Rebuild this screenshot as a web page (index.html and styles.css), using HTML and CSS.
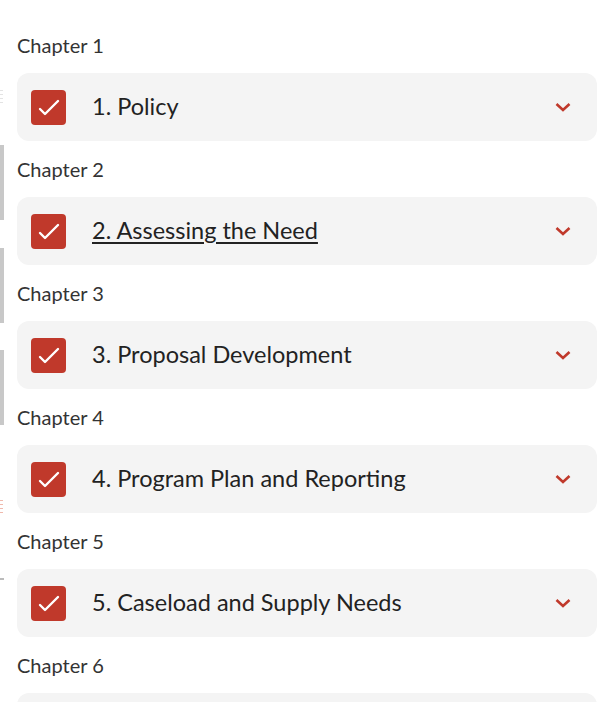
FILE: index.html
```html
<!DOCTYPE html>
<html lang="en">
<head>
<meta charset="utf-8">
<title>Chapters</title>
<link rel="stylesheet" href="styles.css">
</head>
<body>
<div class="edge">
  <span class="mark mark-a"></span>
  <span class="bar bar-1"></span>
  <span class="bar bar-2"></span>
  <span class="bar bar-3"></span>
  <span class="mark mark-b"></span>
  <span class="mark mark-c"></span>
</div>
<main class="list">
  <section class="chapter">
    <div class="label">Chapter 1</div>
    <div class="card">
      <span class="check"><svg viewBox="0 0 35 35" width="35" height="35"><path d="M9 19 L14 24 L27 11" fill="none" stroke="#fff" stroke-width="2.4" stroke-linecap="round" stroke-linejoin="round"/></svg></span>
      <span class="title">1. Policy</span>
      <svg class="chev" viewBox="0 0 16 10" width="16" height="10"><path d="M1.5 2 L8 8 L14.5 2" fill="none" stroke="#c0392b" stroke-width="2.6"/></svg>
    </div>
  </section>
  <section class="chapter">
    <div class="label">Chapter 2</div>
    <div class="card">
      <span class="check"><svg viewBox="0 0 35 35" width="35" height="35"><path d="M9 19 L14 24 L27 11" fill="none" stroke="#fff" stroke-width="2.4" stroke-linecap="round" stroke-linejoin="round"/></svg></span>
      <span class="title underline">2. Assessing the Need</span>
      <svg class="chev" viewBox="0 0 16 10" width="16" height="10"><path d="M1.5 2 L8 8 L14.5 2" fill="none" stroke="#c0392b" stroke-width="2.6"/></svg>
    </div>
  </section>
  <section class="chapter">
    <div class="label">Chapter 3</div>
    <div class="card">
      <span class="check"><svg viewBox="0 0 35 35" width="35" height="35"><path d="M9 19 L14 24 L27 11" fill="none" stroke="#fff" stroke-width="2.4" stroke-linecap="round" stroke-linejoin="round"/></svg></span>
      <span class="title">3. Proposal Development</span>
      <svg class="chev" viewBox="0 0 16 10" width="16" height="10"><path d="M1.5 2 L8 8 L14.5 2" fill="none" stroke="#c0392b" stroke-width="2.6"/></svg>
    </div>
  </section>
  <section class="chapter">
    <div class="label">Chapter 4</div>
    <div class="card">
      <span class="check"><svg viewBox="0 0 35 35" width="35" height="35"><path d="M9 19 L14 24 L27 11" fill="none" stroke="#fff" stroke-width="2.4" stroke-linecap="round" stroke-linejoin="round"/></svg></span>
      <span class="title">4. Program Plan and Reporting</span>
      <svg class="chev" viewBox="0 0 16 10" width="16" height="10"><path d="M1.5 2 L8 8 L14.5 2" fill="none" stroke="#c0392b" stroke-width="2.6"/></svg>
    </div>
  </section>
  <section class="chapter">
    <div class="label">Chapter 5</div>
    <div class="card">
      <span class="check"><svg viewBox="0 0 35 35" width="35" height="35"><path d="M9 19 L14 24 L27 11" fill="none" stroke="#fff" stroke-width="2.4" stroke-linecap="round" stroke-linejoin="round"/></svg></span>
      <span class="title">5. Caseload and Supply Needs</span>
      <svg class="chev" viewBox="0 0 16 10" width="16" height="10"><path d="M1.5 2 L8 8 L14.5 2" fill="none" stroke="#c0392b" stroke-width="2.6"/></svg>
    </div>
  </section>
  <section class="chapter">
    <div class="label">Chapter 6</div>
    <div class="card"></div>
  </section>
</main>
</body>
</html>
```
FILE: styles.css
```css
html, body {
  margin: 0;
  padding: 0;
  background: #ffffff;
  overflow: hidden;
  height: 702px;
}
body {
  font-family: Lato, "Open Sans", sans-serif;
  color: #222;
}
.list {
  padding: 33px 10px 0 17px;
  display: flex;
  flex-direction: column;
}
.chapter {
  display: flex;
  flex-direction: column;
  margin-bottom: 16px;
}
.label {
  font-size: 20px;
  line-height: 24px;
  color: #333;
  margin-bottom: 16px;
}
.card {
  height: 68px;
  background: #f4f4f4;
  border-radius: 12px;
  display: flex;
  align-items: center;
  padding: 0 26px 0 14px;
}
.check {
  width: 35px;
  height: 35px;
  background: #c0392b;
  border-radius: 4px;
  display: flex;
  flex: none;
}
.title {
  font-size: 23.5px;
  line-height: 28px;
  color: #222;
  margin-left: 26px;
  margin-bottom: 3px;
  flex: 1;
}
.underline {
  text-decoration: underline;
  text-decoration-thickness: 2px;
  text-underline-offset: 3px;
}
.chev {
  flex: none;
}
.edge {
  position: absolute;
  left: 0;
  top: 0;
  width: 5px;
  height: 702px;
}
.bar {
  position: absolute;
  left: 0;
  width: 4px;
  background: #c8c8c8;
}
.bar-1 { top: 145px; height: 75px; }
.bar-2 { top: 248px; height: 75px; }
.bar-3 { top: 350px; height: 75px; }
.mark {
  position: absolute;
  left: 0;
  width: 3px;
}
.mark-a { top: 90px; height: 14px; background: repeating-linear-gradient(#e3e3e3 0 1px, transparent 1px 4px); }
.mark-b { top: 500px; height: 15px; background: repeating-linear-gradient(#f0b9ad 0 1px, transparent 1px 4px); }
.mark-c { top: 570px; height: 11px; width: 4px; background: linear-gradient(transparent 0 8px, #bbb 8px 10px, transparent 10px); }
```
